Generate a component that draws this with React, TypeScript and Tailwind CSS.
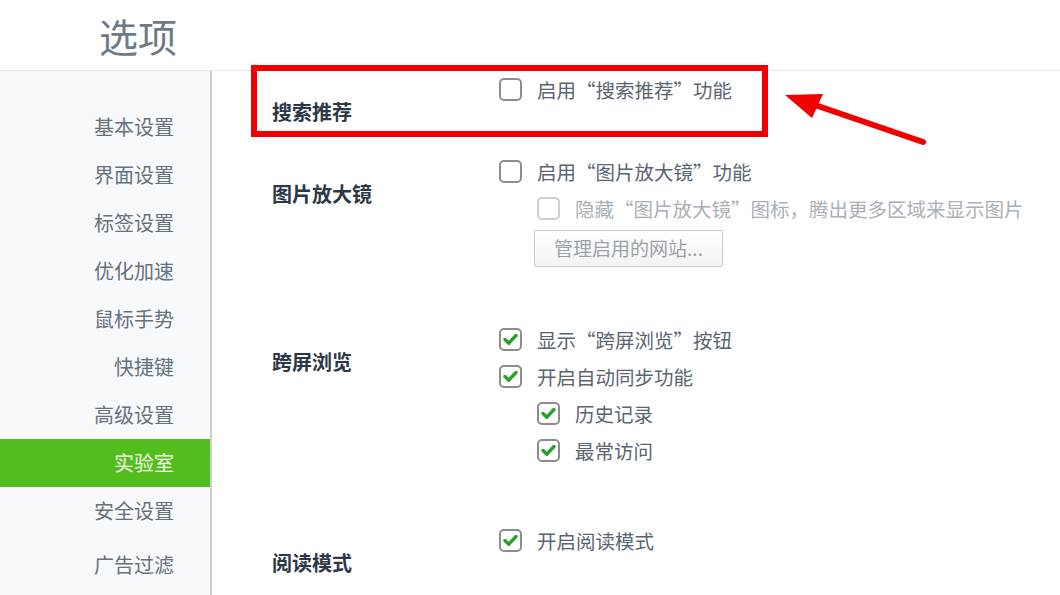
import React from "react";

const font = { fontFamily: '"Noto Sans CJK SC", "Noto Sans", sans-serif' };

function Box({ checked = false, disabled = false }: { checked?: boolean; disabled?: boolean }) {
  return (
    <svg width="23" height="23" viewBox="0 0 23 23" className="shrink-0">
      <rect x="1" y="1" width="21" height="21" rx="4" fill="#fff" stroke={disabled ? "#cfcfcf" : "#8d8d8d"} strokeWidth="2" />
      {checked && (
        <path d="M6 11.5 L9.8 15.2 L17 7.5" fill="none" stroke="#27a227" strokeWidth="3.4" strokeLinecap="round" strokeLinejoin="round" />
      )}
    </svg>
  );
}

function Opt({ text, checked = false, disabled = false, indent = false }: { text: string; checked?: boolean; disabled?: boolean; indent?: boolean }) {
  return (
    <div className={`flex items-center h-[37px] ${indent ? "pl-[38px]" : ""}`}>
      <Box checked={checked} disabled={disabled} />
      <span className={`ml-[15px] text-[19.5px] whitespace-nowrap ${disabled ? "text-[#aab0b6]" : "text-[#5b6572]"}`}>{text}</span>
    </div>
  );
}

function Section({ label, children, className = "" }: { label: string; children: React.ReactNode; className?: string }) {
  return (
    <div className={`flex ${className}`}>
      <div className="w-[227px] shrink-0 pt-[22px] leading-[37px] text-[20px] font-bold text-[#2d3745]">{label}</div>
      <div className="flex flex-col">{children}</div>
    </div>
  );
}

const navItems = ["基本设置", "界面设置", "标签设置", "优化加速", "鼠标手势", "快捷键", "高级设置", "实验室", "安全设置"];

export default function App() {
  return (
    <div lang="zh-CN" style={font} className="relative w-[1060px] h-[595px] overflow-hidden bg-white">
      <div className="h-[71px] border-b border-[#e6e6e6] flex items-center pl-[99px]">
        <span className="text-[39px] text-[#6e7a87] leading-none">选项</span>
      </div>
      <div className="flex h-[524px]">
        <div className="w-[212px] shrink-0 bg-[#f7f9fb] border-r-2 border-[#cfcfcf] pt-[32px] flex flex-col">
          {navItems.map((n) => (
            <div
              key={n}
              className={`h-[48px] flex items-center justify-end pr-[36px] text-[20px] ${n === "实验室" ? "bg-[#53bd1f] text-[#f3fbe4]" : "text-[#67717e]"}`}
            >
              {n}
            </div>
          ))}
          <div className="h-[48px] mt-[6px] flex items-center justify-end pr-[36px] text-[20px] text-[#67717e]">广告过滤</div>
        </div>
        <div className="flex-1 pl-[60px]">
          <Section label="搜索推荐">
            <Opt text="启用“搜索推荐”功能" />
          </Section>
          <Section label="图片放大镜" className="mt-[23px]">
            <Opt text="启用“图片放大镜”功能" />
            <Opt text="隐藏“图片放大镜”图标，腾出更多区域来显示图片" disabled indent />
            <div className="pl-[35px] mt-[3px]">
              <button className="h-[37px] w-[189px] border border-[#c9c9c9] rounded-[2px] bg-gradient-to-b from-white to-[#f3f3f3] text-[19px] text-[#9aa1a9] flex items-center justify-center">
                管理启用的网站...
              </button>
            </div>
          </Section>
          <Section label="跨屏浏览" className="mt-[54px]">
            <Opt text="显示“跨屏浏览”按钮" checked />
            <Opt text="开启自动同步功能" checked />
            <Opt text="历史记录" checked indent />
            <Opt text="最常访问" checked indent />
          </Section>
          <Section label="阅读模式" className="mt-[53px]">
            <Opt text="开启阅读模式" checked />
          </Section>
        </div>
      </div>
      {/* annotation overlay */}
      <div className="absolute left-[251px] top-[65px] w-[517px] h-[72px] border-[6px] border-[#f00000]" />
      <svg className="absolute left-0 top-0" width="1060" height="595" viewBox="0 0 1060 595">
        <line x1="815" y1="105" x2="923" y2="142" stroke="#f00000" strokeWidth="6" strokeLinecap="round" />
        <polygon points="785,95 823,94 812,118" fill="#f00000" />
      </svg>
    </div>
  );
}
